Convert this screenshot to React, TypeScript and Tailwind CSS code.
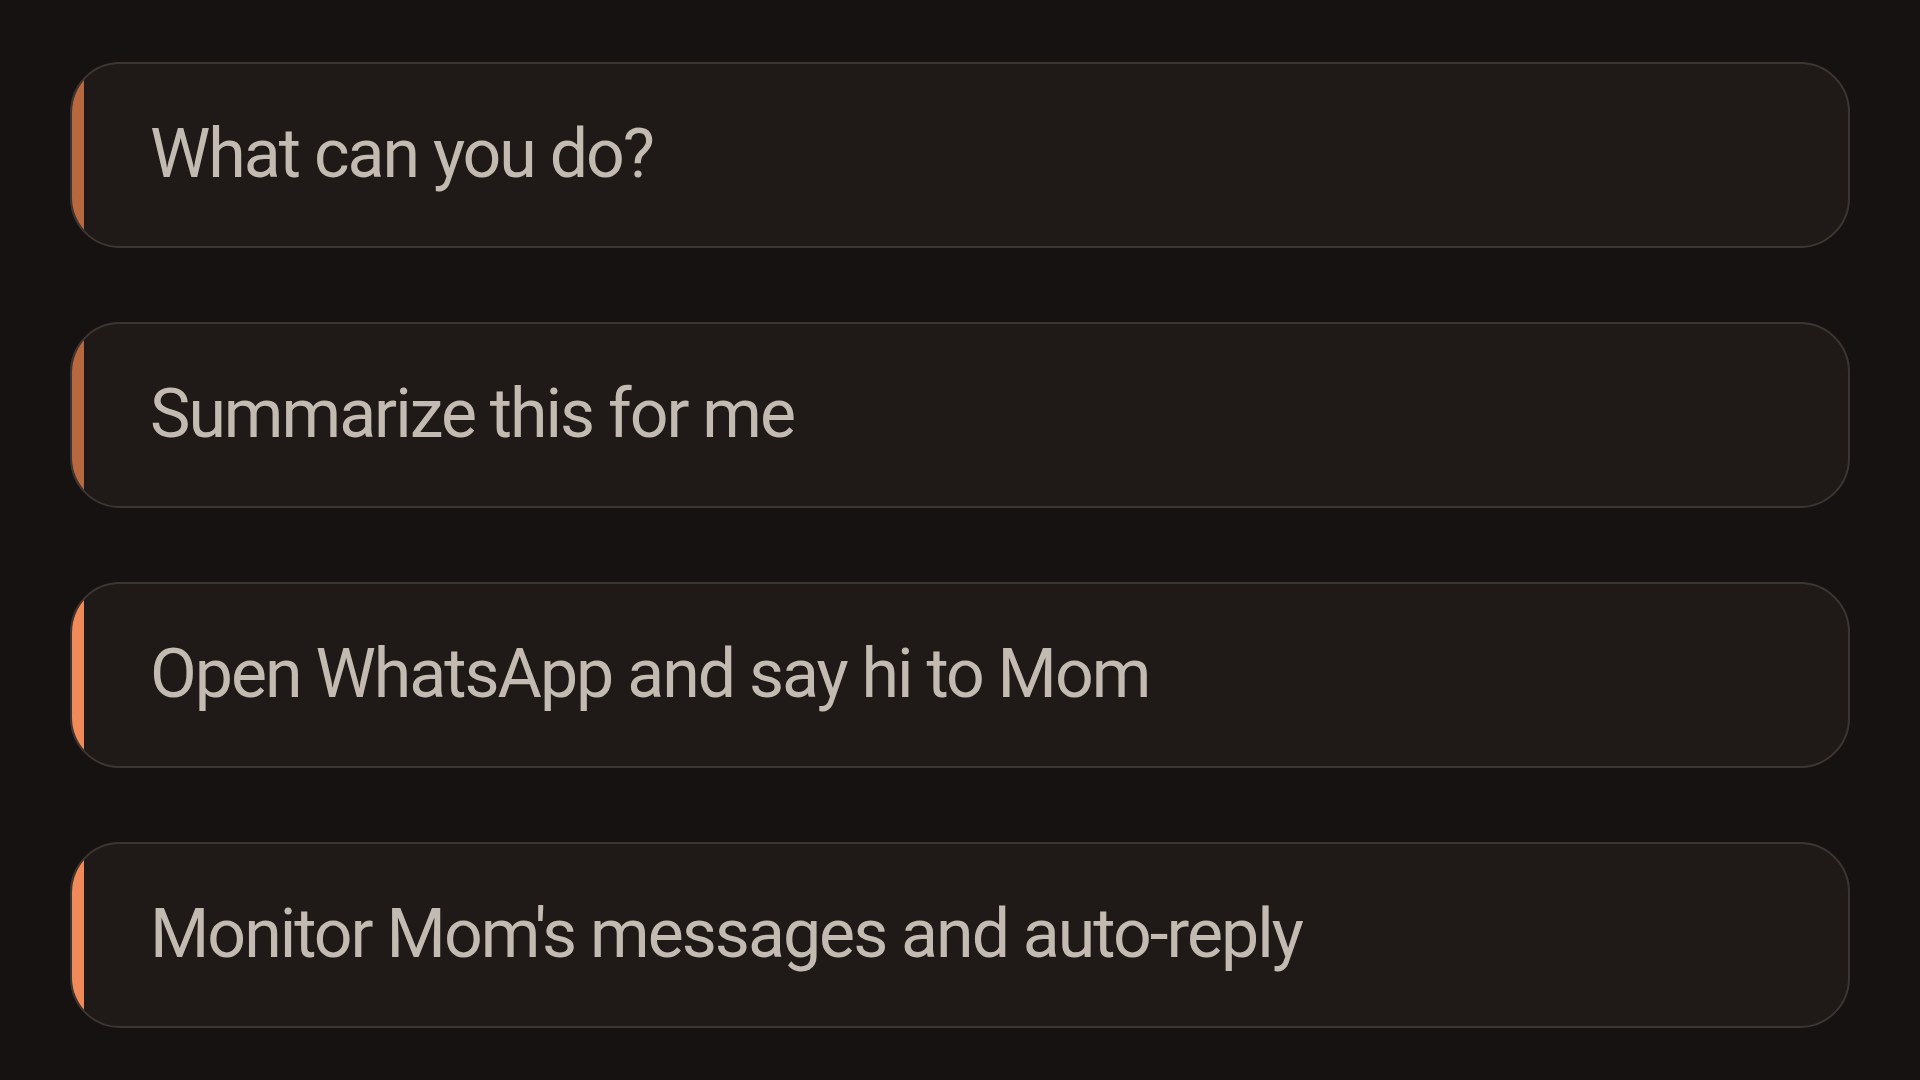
const prompts = [
    { text: "What can you do?", accent: "bg-[#b8683f]" },
    { text: "Summarize this for me", accent: "bg-[#b8683f]" },
    { text: "Open WhatsApp and say hi to Mom", accent: "bg-[#f08a58]" },
    { text: "Monitor Mom's messages and auto-reply", accent: "bg-[#f08a58]" },
];

export default function App() {
    return (
        <div
            className="min-h-screen w-full bg-[#161211] px-[70px] pt-[62px] flex flex-col gap-[74px]"
            style={{ fontFamily: "Roboto, 'Noto Sans', sans-serif" }}
        >
            {prompts.map((p, i) => (
                <div
                    key={i}
                    className="flex h-[186px] overflow-hidden rounded-[50px] border-2 border-[#3d3531] bg-[#1f1a17] cursor-pointer"
                >
                    <div className={`w-[12px] shrink-0 ${p.accent}`} />
                    <div className="flex items-center pl-[66px] pb-[2px] text-[68px] leading-none tracking-[-2px] text-[#c3bbb1]">
                        {p.text}
                    </div>
                </div>
            ))}
        </div>
    );
}
